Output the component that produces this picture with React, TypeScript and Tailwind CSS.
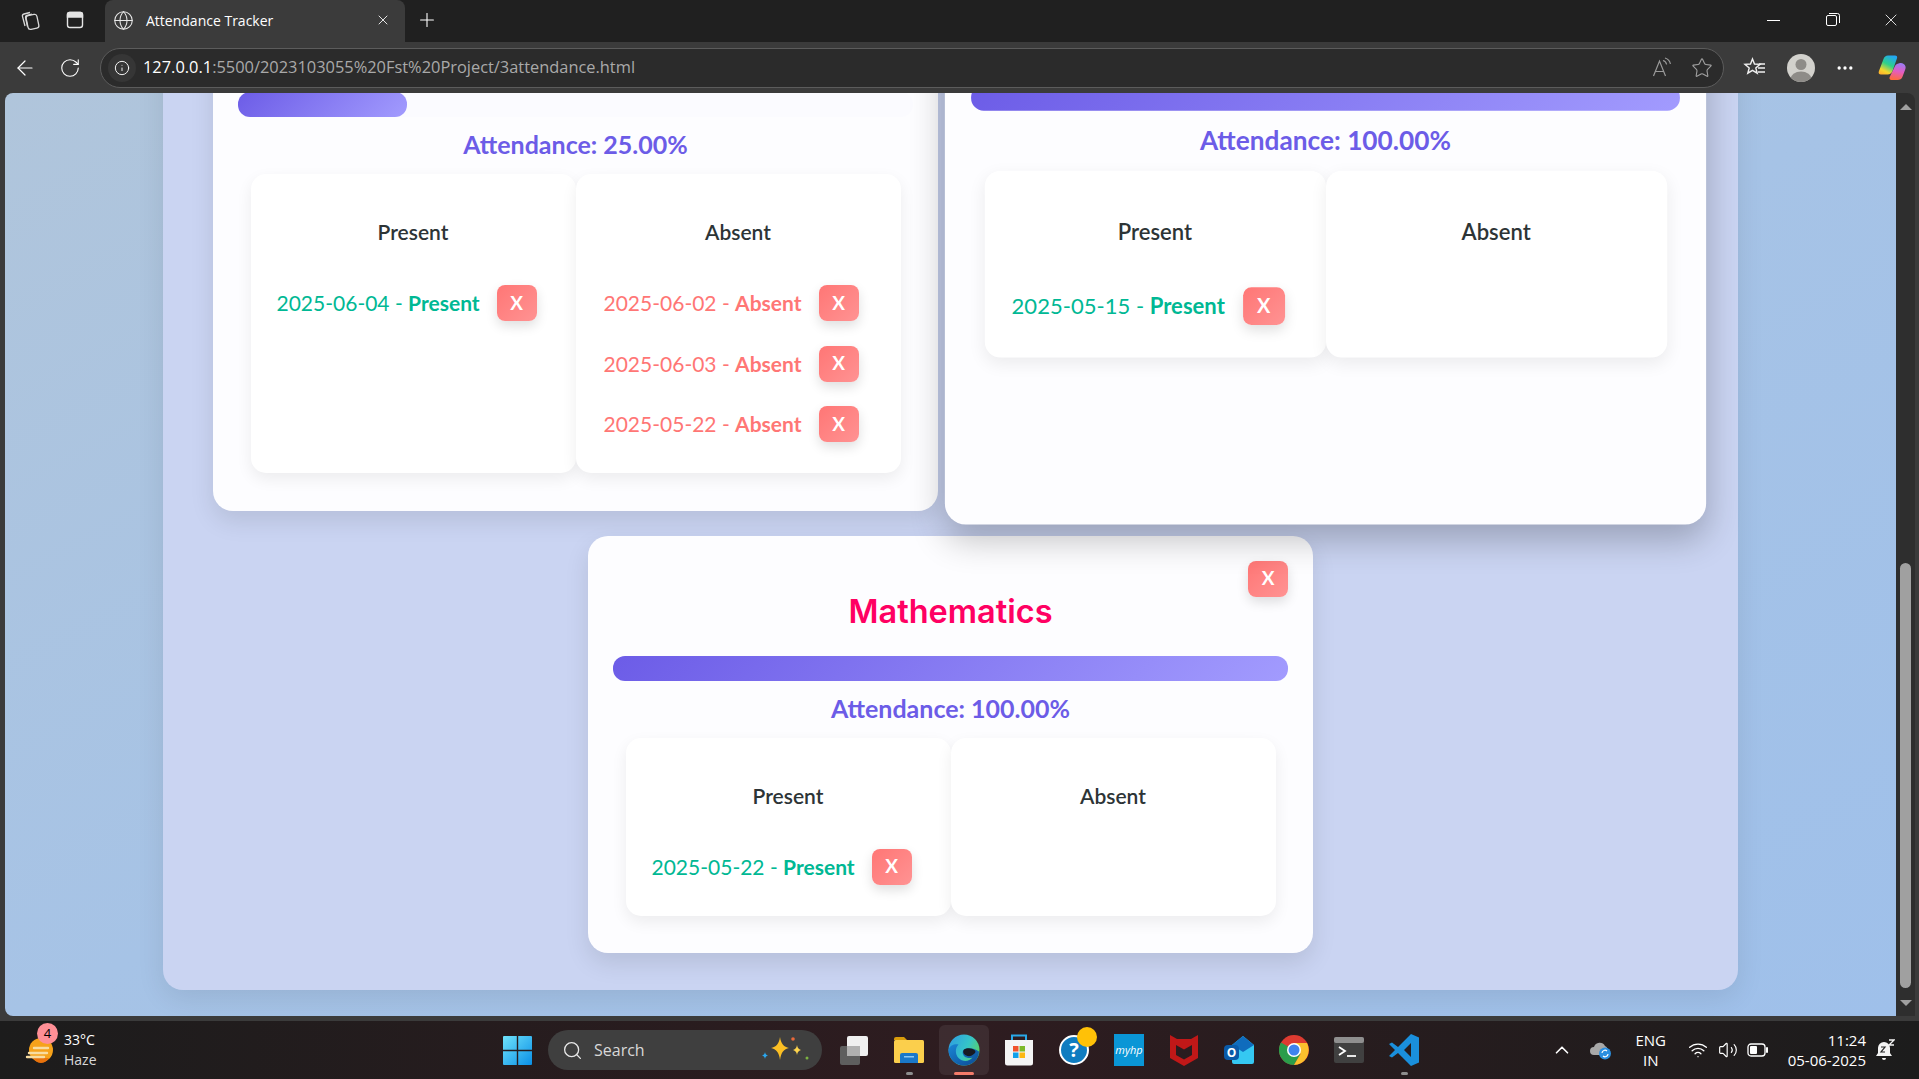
import { ArrowLeft, ChevronUp, Globe, Info, MoreHorizontal, Plus, RotateCw, Search, Star, Volume2, Wifi, X } from "lucide-react";

type Mark = { date: string; status: "Present" | "Absent" };

type Subject = {
	title?: string;
	percent: number;
	present: Mark[];
	absent: Mark[];
	hovered?: boolean;
};

const subjects: Subject[] = [
	{
		percent: 25,
		present: [{ date: "2025-06-04", status: "Present" }],
		absent: [
			{ date: "2025-06-02", status: "Absent" },
			{ date: "2025-06-03", status: "Absent" },
			{ date: "2025-05-22", status: "Absent" },
		],
	},
	{
		percent: 100,
		hovered: true,
		present: [{ date: "2025-05-15", status: "Present" }],
		absent: [],
	},
	{
		title: "Mathematics",
		percent: 100,
		present: [{ date: "2025-05-22", status: "Present" }],
		absent: [],
	},
];

function DeleteButton() {
	return (
		<button
			type="button"
			className="h-9 w-10 shrink-0 rounded-lg bg-[linear-gradient(135deg,#ff7675,#ff9393)] text-[19px] font-bold text-white shadow-[0_5px_12px_rgba(0,0,0,0.13)]"
		>
			X
		</button>
	);
}

function MarkPanel({ label, marks }: { label: string; marks: Mark[] }) {
	return (
		<div className="w-1/2 rounded-[15px] bg-white pt-10 pb-[31px] shadow-[0_6px_16px_rgba(0,0,0,0.07)]">
			<h3 className="flex h-9 items-center justify-center text-[21px] font-semibold text-[#2d3436]">{label}</h3>
			<ul className={`mt-[35px] flex flex-col gap-[24.5px] ${label === "Absent" ? "pl-[28px]" : "pl-[26px]"}`}>
				{marks.map((mark) => (
					<li
						key={mark.date}
						className={`flex items-center gap-[17px] text-[21px] ${mark.status === "Present" ? "text-[#00b894]" : "text-[#ff7675]"}`}
					>
						<span>
							{mark.date} - <strong className="font-bold">{mark.status}</strong>
						</span>
						<DeleteButton />
					</li>
				))}
			</ul>
		</div>
	);
}

function SubjectCard({ subject }: { subject: Subject }) {
	return (
		<div
			className={`relative w-[725px] rounded-[20px] bg-[#fdfdff] px-[25px] pb-[37.5px] ${subject.hovered ? "z-10 scale-[1.05] shadow-[0_14px_32px_rgba(0,0,0,0.24)]" : "shadow-[0_10px_24px_rgba(0,0,0,0.1)]"}`}
		>
			{subject.title && (
				<div className="absolute top-[25px] right-[25px]">
					<DeleteButton />
				</div>
			)}
			<h2 className="mt-[57px] mb-[23px] flex h-10 items-center justify-center text-[32.5px] font-semibold text-[#ff0062] [font-family:Inter,sans-serif]">
				{subject.title}
			</h2>
			<div className="h-[25px] rounded-xl bg-[#fbfbff]">
				<div
					className="h-full rounded-xl bg-[linear-gradient(135deg,#6c5ce7,#a29bfe)]"
					style={{ width: `${subject.percent}%` }}
				/>
			</div>
			<p className="mt-[11px] mb-3 flex h-[34px] items-center justify-center text-[25px] font-bold text-[#6c5ce7]">
				Attendance: {subject.percent.toFixed(2)}%
			</p>
			<div className="mx-[12.5px] flex">
				<MarkPanel label="Present" marks={subject.present} />
				<MarkPanel label="Absent" marks={subject.absent} />
			</div>
		</div>
	);
}

function Workspaces() {
	return (
		<svg width="22" height="22" viewBox="0 0 22 22" fill="none" stroke="#d8d8d8" strokeWidth="1.3">
			<rect x="8" y="6" width="11" height="14" rx="2.5" transform="rotate(-12 13 13)" />
			<path d="M6 17 3.5 7.5c-.3-1.2.4-2.2 1.5-2.5l6-1.5" />
			<path d="M8.5 17.5 6.5 8.5c-.2-1 .4-1.9 1.4-2.2l5-1.2" />
		</svg>
	);
}

function TabsIcon() {
	return (
		<svg width="20" height="20" viewBox="0 0 20 20" fill="none" stroke="#e4e4e4" strokeWidth="1.4">
			<rect x="2.5" y="2.5" width="15" height="15" rx="2.5" />
			<path d="M2.5 4.5c0-1 1-2 2-2h11c1 0 2 1 2 2V7h-15z" fill="#e4e4e4" />
		</svg>
	);
}

function ReadAloud() {
	return (
		<svg width="22" height="22" viewBox="0 0 22 22" fill="none" stroke="#9a9a9a" strokeWidth="1.2">
			<path d="M1.5 19 7.5 4l6 15M3.5 14.5h8" />
			<path d="M11 3.5c2 .5 3.2 2 3.6 4M13 1c3 .8 4.8 3 5.4 6" />
		</svg>
	);
}

function Favorites() {
	return (
		<svg width="24" height="24" viewBox="0 0 24 24" fill="none" stroke="#f0f0f0" strokeWidth="1.4">
			<path d="m9.5 3 2 5 5.5.4-4.2 3.5 1.4 5.3-4.7-2.9-4.7 2.9 1.4-5.3L2 8.4 7.5 8z" />
			<path d="M16 8h6M15 12h7M15 16h7" />
		</svg>
	);
}

function Profile() {
	return (
		<svg width="28" height="28" viewBox="0 0 28 28">
			<clipPath id="avatar">
				<circle cx="14" cy="14" r="14" />
			</clipPath>
			<g clipPath="url(#avatar)">
				<rect width="28" height="28" fill="#d2d1cc" />
				<circle cx="14" cy="10.5" r="5.5" fill="#8e8c88" />
				<ellipse cx="14" cy="25" rx="10.5" ry="7.5" fill="#8e8c88" />
			</g>
		</svg>
	);
}

function Copilot() {
	return (
		<svg width="28" height="28" viewBox="0 0 28 28">
			<defs>
				<linearGradient id="copA" x1="0.7" y1="0" x2="0.2" y2="1">
					<stop offset="0" stopColor="#22a7f5" />
					<stop offset="0.45" stopColor="#2fd08a" />
					<stop offset="0.8" stopColor="#f5d62c" />
					<stop offset="1" stopColor="#ffb12c" />
				</linearGradient>
				<linearGradient id="copB" x1="0.6" y1="0" x2="0.4" y2="1">
					<stop offset="0" stopColor="#9a7cf5" />
					<stop offset="0.5" stopColor="#e45cc0" />
					<stop offset="1" stopColor="#ff6a3c" />
				</linearGradient>
			</defs>
			<path d="M22 9c2-.5 5 1 5.5 3.5.3 1.2 0 2.2-.4 3.3l-2.6 7c-.8 2.2-2.7 3.2-5 3.200h-6c-1.8 0-2.5-1.400-1.8-2.900L17 12c.8-1.700 3-2.600 5-3z" fill="url(#copB)" />
			<path d="M10 1.5h7c1.8 0 2.600 1.200 2 2.800L14.500 17c-.8 2.200-2.500 3.500-5 3.500H3c-1.800 0-2.800-1.300-2.200-3L5.500 5c.8-2.200 2.300-3.500 4.500-3.500z" fill="url(#copA)" />
		</svg>
	);
}

function WeatherIcon() {
	return (
		<svg width="32" height="32" viewBox="0 0 32 32">
			<circle cx="18" cy="16" r="12" fill="#f6a21a" />
			<path d="M10 24h16c-2 3.4-5 5-8 5s-6-1.600-8-5z" fill="#e8720c" />
			<path d="M6 19h18M4 23h17M11 14h14" stroke="#f8dca0" strokeWidth="2.4" strokeLinecap="round" />
		</svg>
	);
}

function WindowsLogo() {
	return (
		<svg width="29" height="29" viewBox="0 0 29 29">
			<defs>
				<linearGradient id="winLogo" x1="0" y1="0" x2="1" y2="1">
					<stop offset="0" stopColor="#6fe3fb" />
					<stop offset="1" stopColor="#0a8fe6" />
				</linearGradient>
			</defs>
			<path d="M1 0h12.800v13.800H0V1a1 1 0 0 1 1-1zM15.200 0H28a1 1 0 0 1 1 1v12.800H15.200zM0 15.200h13.800V29H1a1 1 0 0 1-1-1zM15.200 15.200H29V28a1 1 0 0 1-1 1H15.200z" fill="url(#winLogo)" />
		</svg>
	);
}

function Sparkles() {
	return (
		<svg width="54" height="32" viewBox="0 0 54 32">
			<path d="M24 3c1 7 4 10 9 11-5 1-8 4-9 12-1-8-4-11-9-12 5-1 8-4 9-11z" fill="#fbbf24" />
			<path d="M41 11c.5 3 1.500 4 4 5-2.500 1-3.500 2-4 5-.5-3-1.500-4-4-5 2.500-1 3.500-2 4-5z" fill="#fcd34d" />
			<path d="M9 18c.3 2 1 3 3 3.500-2 .5-2.700 1.500-3 3.500-.3-2-1-3-3-3.500 2-.5 2.700-1.500 3-3.500z" fill="#2ba8f0" />
			<circle cx="37" cy="5" r="1.800" fill="#e8683a" />
			<circle cx="51" cy="24" r="1.500" fill="#7cb342" />
		</svg>
	);
}

function TaskView() {
	return (
		<svg width="32" height="32" viewBox="0 0 32 32">
			<rect x="2" y="12" width="20" height="19" rx="2" fill="#5e5e5e" />
			<rect x="9" y="2" width="21" height="20" rx="2" fill="#f0f0f0" />
			<rect x="9" y="12" width="13" height="10" fill="#b0b0b0" />
		</svg>
	);
}

function FolderIcon() {
	return (
		<svg width="32" height="32" viewBox="0 0 32 32">
			<path d="M1 5a2 2 0 0 1 2-2h8l3 3h-13z" fill="#d99c0b" />
			<rect x="1" y="6" width="30" height="23" rx="1.5" fill="#fbcf4c" />
			<path d="M7 29v-8a2 2 0 0 1 2-2h14a2 2 0 0 1 2 2v8z" fill="#1a78c9" />
			<rect x="11" y="22" width="10" height="1.5" fill="#8cc8f2" />
		</svg>
	);
}

function EdgeIcon() {
	return (
		<svg width="32" height="32" viewBox="0 0 32 32">
			<defs>
				<linearGradient id="edgeA" x1="0" y1="0.2" x2="1" y2="0.7">
					<stop offset="0" stopColor="#2f9fe0" />
					<stop offset="0.55" stopColor="#35c4c8" />
					<stop offset="1" stopColor="#5fd35a" />
				</linearGradient>
				<linearGradient id="edgeB" x1="0" y1="0" x2="1" y2="1">
					<stop offset="0" stopColor="#1a86d6" />
					<stop offset="1" stopColor="#0c4a92" />
				</linearGradient>
			</defs>
			<circle cx="16" cy="16" r="15.5" fill="url(#edgeA)" />
			<path d="M31 17.5c0 8-7 14-15 14C8 31.500.5 25 .5 15.500 2 11 7 9.500 10.500 10.500 7 14 7 20 10.500 24c4 4 10.500 4 14-.5-3 1-6 .5-8-1-2-1.800-2.500-4.500-1-6.500 3-2 9-3 15.500 1.500z" fill="url(#edgeB)" />
			<path d="M16 15.500c2.500-1.800 8-2 11 1 .8.900.5 2-.5 3-2 2-4.500 3-7 2.500-3.500-.7-5.500-4-3.500-6.500z" fill="#181a22" />
		</svg>
	);
}

function StoreIcon() {
	return (
		<svg width="30" height="32" viewBox="0 0 30 32">
			<path d="M8 6V1.500h14V6" fill="none" stroke="#29a8e8" strokeWidth="2" />
			<path d="M1 6h28v23a2.500 2.500 0 0 1-2.500 2.500h-23A2.500 2.500 0 0 1 1 29z" fill="#f4f4f4" />
			<rect x="9" y="12" width="5.5" height="5.5" fill="#f0522b" />
			<rect x="15.500" y="12" width="5.5" height="5.5" fill="#7db928" />
			<rect x="9" y="18.500" width="5.5" height="5.5" fill="#11a0ea" />
			<rect x="15.500" y="18.500" width="5.5" height="5.5" fill="#fdb813" />
		</svg>
	);
}

function HelpIcon() {
	return (
		<div className="relative flex h-[30px] w-[30px] items-center justify-center rounded-full border-2 border-white bg-[#0f7cc0] text-[20px] leading-none font-bold text-white">
			?
			<span className="absolute -top-2.5 -right-2.5 h-5 w-5 rounded-full bg-[#ffc107]" />
		</div>
	);
}

function McAfeeIcon() {
	return (
		<svg width="28" height="32" viewBox="0 0 28 32">
			<path d="M0 1l7 4h14l7-4v23l-14 8-14-8zM6 11v10l8 4.500 8-4.500V11l-8 4.500z" fill="#c01818" fillRule="evenodd" />
		</svg>
	);
}

function OutlookIcon() {
	return (
		<div className="relative h-[28px] w-[30px]">
			<svg width="30" height="28" viewBox="0 0 30 28" className="absolute inset-0">
				<path d="M8 9 19 0l11 9v17a2 2 0 0 1-2 2H10a2 2 0 0 1-2-2z" fill="#35c8f2" />
				<path d="M8 9 19 0l11 9-11 7z" fill="#0f6cbd" />
			</svg>
			<div className="absolute top-[9px] left-0 flex h-[15px] w-[15px] items-center justify-center rounded-sm bg-[#0a5aa8] text-[12px] font-bold text-white">
				O
			</div>
		</div>
	);
}

function ChromeIcon() {
	return (
		<svg width="30" height="30" viewBox="0 0 30 30">
			<circle cx="15" cy="15" r="15" fill="#dd3b31" />
			<path d="M15 15 2 7.500A15 15 0 0 0 15 30l6.500-11z" fill="#2a9d4a" />
			<path d="M15 8h13a15 15 0 0 1-13 22l6.500-11z" fill="#fbc02d" />
			<circle cx="15" cy="15" r="7" fill="#fff" />
			<circle cx="15" cy="15" r="5.5" fill="#3f83ee" />
		</svg>
	);
}

function TerminalIcon() {
	return (
		<svg width="30" height="26" viewBox="0 0 30 26">
			<rect width="30" height="26" rx="2" fill="#404040" />
			<rect width="30" height="6" rx="2" fill="#8f8f8f" />
			<path d="m5 10 6 4-6 4" fill="none" stroke="#fff" strokeWidth="1.8" />
			<path d="M13 19h9" stroke="#e8e8e8" strokeWidth="2" />
		</svg>
	);
}

function VsCodeIcon() {
	return (
		<svg width="30" height="32" viewBox="0 0 30 32">
			<path d="M22 0 30 3.500v25L22 32 9 19l-6 4.500L0 22l6-6-6-6 3-1.500L9 13zm0 9-7 7 7 7z" fill="#1a8fdc" fillRule="evenodd" />
		</svg>
	);
}

function CloudSync() {
	return (
		<svg width="22" height="20" viewBox="0 0 22 20">
			<path d="M4 15a4 4 0 0 1 0-8 6 6 0 0 1 11-1 4 4 0 0 1 2 6v3z" fill="#a8a8a8" />
			<circle cx="15" cy="13.5" r="6" fill="#2b8fe0" />
			<path d="M12 13a3 3 0 0 1 5-2M18 14a3 3 0 0 1-5 2" fill="none" stroke="#fff" strokeWidth="1.2" />
		</svg>
	);
}

function BatteryIcon() {
	return (
		<svg width="22" height="14" viewBox="0 0 22 14" fill="none">
			<rect x="1" y="1" width="17" height="12" rx="3" stroke="#fff" strokeWidth="1.3" />
			<rect x="3" y="3" width="7" height="8" rx="1" fill="#fff" />
			<path d="M20 5v4" stroke="#fff" strokeWidth="2" strokeLinecap="round" />
		</svg>
	);
}

function BellSnooze() {
	return (
		<svg width="20" height="22" viewBox="0 0 20 22">
			<path d="M9 3a6 6 0 0 1 6 6v5l2 3H1l2-3V9a6 6 0 0 1 6-6z" fill="#f4f4f4" />
			<path d="M7 19h4a2 2 0 0 1-4 0z" fill="#f4f4f4" />
			<path d="M6 8h4l-4 5h4" fill="none" stroke="#222" strokeWidth="1.2" />
			<path d="M14 1h5l-5 5h5" fill="none" stroke="#f4f4f4" strokeWidth="1.3" />
		</svg>
	);
}

function TaskIcon({ children, active, open }: { children: React.ReactNode; active?: boolean; open?: boolean }) {
	return (
		<div className={`relative flex h-[50px] w-[50px] items-center justify-center rounded-md ${active ? "bg-white/7" : ""}`}>
			{children}
			{active && <span className="absolute bottom-0 h-[3px] w-5 rounded-full bg-[#f47c6a]" />}
			{open && <span className="absolute bottom-0 h-[3px] w-[7px] rounded-full bg-[#8e8e8e]" />}
		</div>
	);
}

export default function App() {
	return (
		<div className="flex h-screen w-screen flex-col overflow-hidden bg-[#3b3b3b] [font-family:Lato,sans-serif]">
			{/* browser top bar */}
			<div className="flex h-[42px] shrink-0 items-center bg-[#202020] pb-[2px] text-white [font-family:'Open_Sans',sans-serif]">
				<div className="flex w-[105px] items-center gap-[24px] pl-[19px]">
					<Workspaces />
					<TabsIcon />
				</div>
				<div className="-mb-[2px] flex h-[42px] w-[300px] items-center rounded-t-lg bg-[#3b3b3b] pr-[14px] pl-[8px]">
					<Globe size={21} strokeWidth={1.2} className="mb-[2px] text-[#e8e8e8]" />
					<span className="mb-[2px] ml-[12px] flex-1 text-[14px]">Attendance Tracker</span>
					<X size={16} strokeWidth={1.3} className="mb-[2px]" />
				</div>
				<Plus size={22} strokeWidth={1.2} className="ml-[11px]" />
				<div className="ml-auto flex items-center pr-[18px]">
					<span className="h-px w-[13px] bg-white" />
					<svg width="14" height="14" viewBox="0 0 14 14" fill="none" stroke="#fff" strokeWidth="1" className="ml-[46px]">
						<rect x="0.5" y="2.5" width="10" height="10" rx="1.5" />
						<path d="M3 .5h8.500a2 2 0 0 1 2 2V10" />
					</svg>
					<X size={20} strokeWidth={1} className="ml-[41px]" />
				</div>
			</div>

			{/* address bar */}
			<div className="flex h-[51px] shrink-0 items-center text-white">
				<div className="flex w-[100px] items-center gap-[22px] pl-[13px]">
					<ArrowLeft size={24} strokeWidth={1.2} />
					<RotateCw size={22} strokeWidth={1.2} />
				</div>
				<div className="flex h-[40px] w-[1624px] items-center rounded-full border border-[#5c5c5c] bg-[#2b2b2b] pr-[10px] pl-[7px]">
					<div className="flex h-7 w-7 items-center justify-center rounded-full bg-[#363636]">
						<Info size={16} strokeWidth={1.4} />
					</div>
					<span className="ml-[7px] flex-1 text-[16.4px] text-[#a9a9a9] [font-family:'Open_Sans',sans-serif]">
						<span className="text-white">127.0.0.1</span>:5500/2023103055%20Fst%20Project/3attendance.html
					</span>
					<ReadAloud />
					<Star size={22} strokeWidth={1.2} className="ml-[17px] text-[#a0a0a0]" />
				</div>
				<div className="ml-[19px]">
					<Favorites />
				</div>
				<div className="ml-[20px]">
					<Profile />
				</div>
				<MoreHorizontal size={20} className="ml-[20px]" />
				<div className="ml-[23px]">
					<Copilot />
				</div>
			</div>

			{/* page */}
			<div className="flex min-h-0 flex-1 pl-[5px]">
				<main className="min-w-0 flex-1 overflow-hidden rounded-tl-lg rounded-bl-lg bg-gradient-to-br from-[#b0c5db] via-[#a6c3e6] to-[#9fc0ea]">
					<div className="mx-auto mt-[-146px] w-[1575px] rounded-[20px] bg-[#cad4f2] px-[50px] pt-[25px] pb-[37px] shadow-[0_8px_28px_rgba(0,0,0,0.09)]">
						<div className="flex flex-wrap justify-center gap-[25px]">
							{subjects.map((subject) => (
								<SubjectCard key={`${subject.title}-${subject.present[0].date}`} subject={subject} />
							))}
						</div>
					</div>
				</main>
				<div className="flex w-[19px] shrink-0 flex-col items-center rounded-tr-lg bg-[#2e2e2e] pt-[11px] pb-[10px]">
					<span className="h-0 w-0 border-x-[6px] border-b-[6px] border-x-transparent border-b-[#a0a0a0]" />
					<div className="flex-1" />
					<div className="h-[425px] w-[11px] rounded-md bg-[#a0a0a0]" />
					<div className="h-[12px]" />
					<span className="h-0 w-0 border-x-[6px] border-t-[6px] border-x-transparent border-t-[#a0a0a0]" />
				</div>
				<div className="w-1 shrink-0" />
			</div>

			{/* taskbar */}
			<div className="mt-[5px] flex h-[58px] shrink-0 items-center bg-gradient-to-r from-[#1c1c1c] via-[#2e1c20] to-[#1c1c1c] text-white [font-family:'Open_Sans',sans-serif]">
				<div className="relative flex w-[503px] items-center pl-[23px]">
					<WeatherIcon />
					<span className="absolute top-[-7px] left-[37px] flex h-[21px] w-[21px] items-center justify-center rounded-full bg-[#ff8f96] text-[13px] text-black">
						4
					</span>
					<div className="ml-[9px] flex flex-col text-[14px] leading-[20px]">
						<span>33°C</span>
						<span className="text-[#d8d8d8]">Haze</span>
					</div>
				</div>
				<WindowsLogo />
				<div className="ml-[16px] flex h-[40px] w-[274px] items-center rounded-full bg-[#3f3f3f] pr-[12px] pl-[14px]">
					<Search size={21} strokeWidth={1.5} className="text-[#e8e8e8]" />
					<span className="ml-[11px] flex-1 text-[16px] text-[#d8d8d8]">Search</span>
					<Sparkles />
				</div>
				<div className="ml-[7px] flex items-center gap-[5px]">
					<TaskIcon>
						<TaskView />
					</TaskIcon>
					<TaskIcon open>
						<FolderIcon />
					</TaskIcon>
					<TaskIcon active>
						<EdgeIcon />
					</TaskIcon>
					<TaskIcon>
						<StoreIcon />
					</TaskIcon>
					<TaskIcon>
						<HelpIcon />
					</TaskIcon>
					<TaskIcon>
						<div className="flex h-[32px] w-[30px] items-center justify-center bg-[#0a96d6] text-[11px] text-white italic">myhp</div>
					</TaskIcon>
					<TaskIcon>
						<McAfeeIcon />
					</TaskIcon>
					<TaskIcon>
						<OutlookIcon />
					</TaskIcon>
					<TaskIcon>
						<ChromeIcon />
					</TaskIcon>
					<TaskIcon>
						<TerminalIcon />
					</TaskIcon>
					<TaskIcon open>
						<VsCodeIcon />
					</TaskIcon>
				</div>
				<div className="ml-auto flex items-center pr-[24px]">
					<ChevronUp size={22} strokeWidth={1.8} />
					<div className="ml-[17px]">
						<CloudSync />
					</div>
					<div className="ml-[17px] flex w-[44px] flex-col items-center text-[15px] leading-[20px]">
						<span>ENG</span>
						<span>IN</span>
					</div>
					<Wifi size={20} strokeWidth={1.6} className="ml-[15px]" />
					<Volume2 size={20} strokeWidth={1.4} className="ml-[10px]" />
					<div className="ml-[9px]">
						<BatteryIcon />
					</div>
					<div className="ml-[19px] flex flex-col items-end text-[15px] leading-[20px]">
						<span>11:24</span>
						<span>05-06-2025</span>
					</div>
					<div className="ml-[9px]">
						<BellSnooze />
					</div>
				</div>
			</div>
		</div>
	);
}
